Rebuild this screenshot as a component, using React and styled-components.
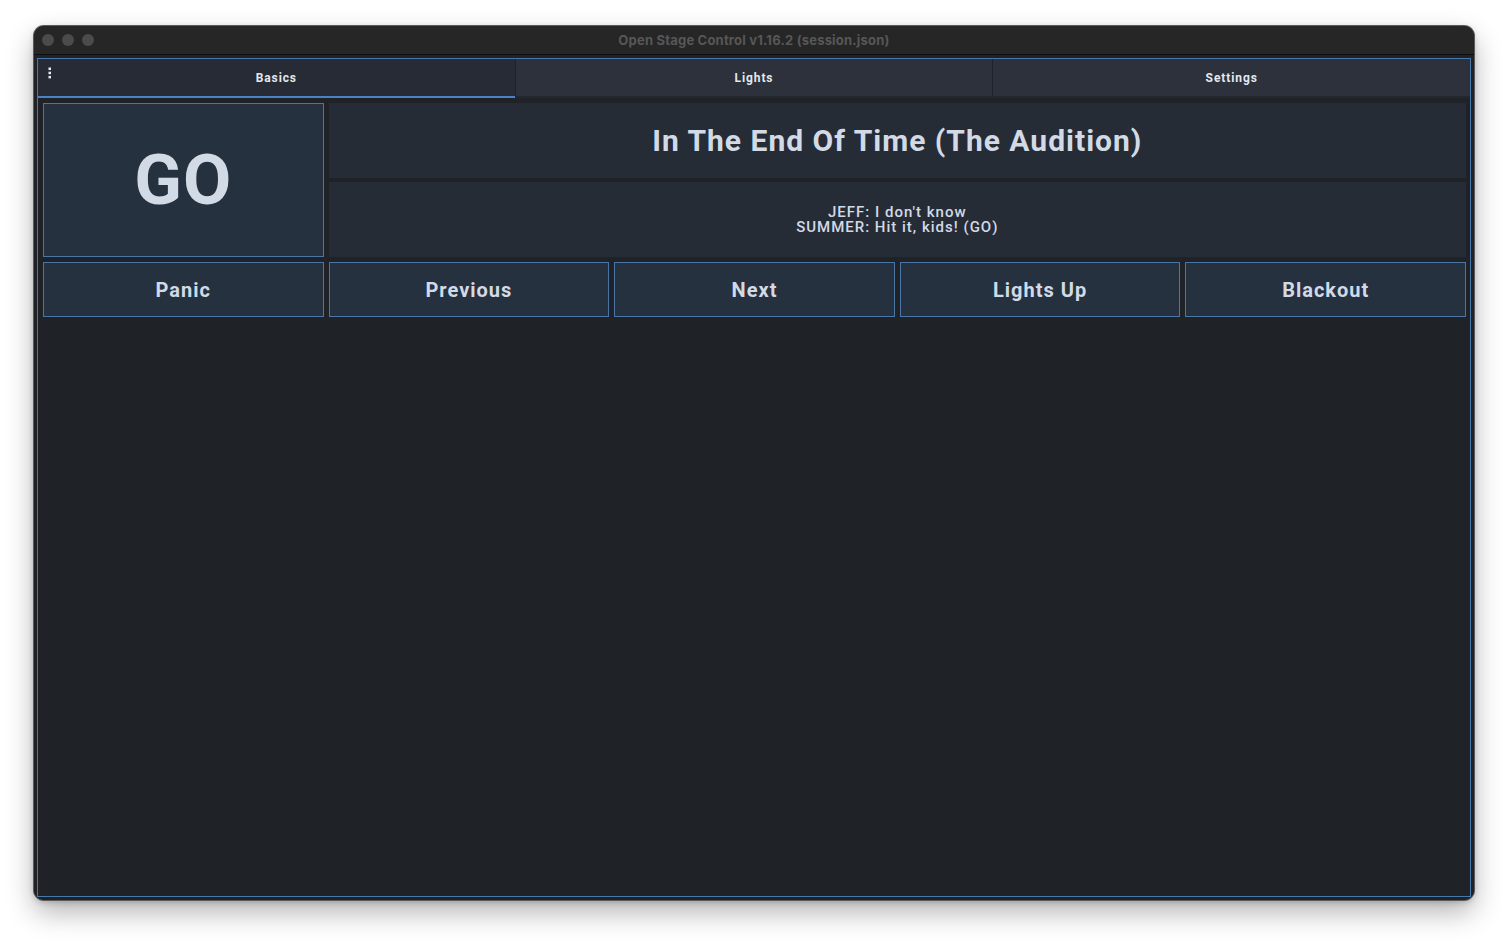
import React from 'react'
import styled, { createGlobalStyle } from 'styled-components'

const Global = createGlobalStyle`
    html, body {
        margin: 0;
        padding: 0;
        background: #ffffff;
    }
    * {
        box-sizing: border-box;
    }
`

const tabs = ['Basics', 'Lights', 'Settings']
const buttons = ['Panic', 'Previous', 'Next', 'Lights Up', 'Blackout']

function App() {
    return (
        <Page>
            <Global />
            <Window>
                <TitleBar>
                    <Lights>
                        <Dot />
                        <Dot />
                        <Dot />
                    </Lights>
                    <Title>Open Stage Control v1.16.2 (session.json)</Title>
                    <span />
                </TitleBar>
                <Body>
                    <Frame>
                        <TabBar>
                            <MenuIcon width='4' height='12' viewBox='0 0 4 12'>
                                <rect x='0.5' y='0.5' width='2.5' height='2.5' fill='#e8ecf2' />
                                <rect x='0.5' y='4.7' width='2.5' height='2.5' fill='#e8ecf2' />
                                <rect x='0.5' y='8.9' width='2.5' height='2.5' fill='#e8ecf2' />
                            </MenuIcon>
                            {tabs.map((t, i) => (
                                <Tab key={t} $active={i === 0}>{t}</Tab>
                            ))}
                        </TabBar>
                        <Panel>
                            <GoButton>GO</GoButton>
                            <TextBox $big>In The End Of Time (The Audition)</TextBox>
                            <TextBox>
                                JEFF: I don't know
                                <br />
                                SUMMER: Hit it, kids! (GO)
                            </TextBox>
                            {buttons.map((b) => (
                                <Button key={b}>{b}</Button>
                            ))}
                        </Panel>
                    </Frame>
                </Body>
            </Window>
        </Page>
    )
}

export default App

const Page = styled.div`
    min-height: 100vh;
    padding: 26px 34px 43px;
    background: #ffffff;
`

const Window = styled.div`
    width: 1440px;
    height: 874px;
    border-radius: 10px;
    overflow: hidden;
    display: flex;
    flex-direction: column;
    background: #1f2227;
    box-shadow: 0 0 0 1px #5a5a5a, 0 12px 28px rgba(0, 0, 0, 0.3), 0 2px 6px rgba(0, 0, 0, 0.2);
`

const TitleBar = styled.div`
    height: 29px;
    flex-shrink: 0;
    display: grid;
    grid-template-columns: 1fr auto 1fr;
    align-items: center;
    background: #262626;
    border-bottom: 1px solid #0e0e0e;
`

const Lights = styled.div`
    display: flex;
    gap: 8px;
    padding-left: 8px;
`

const Dot = styled.span`
    width: 12px;
    height: 12px;
    border-radius: 50%;
    background: #4b4b4b;
`

const Title = styled.div`
    font-family: Inter, 'Liberation Sans', sans-serif;
    font-size: 13px;
    font-weight: 700;
    letter-spacing: 0.2px;
    color: #575757;
`

const Body = styled.div`
    flex: 1;
    padding: 3px;
    background: #1f2227;
`

const Frame = styled.div`
    height: 100%;
    border: 1px solid #4878aa;
    display: flex;
    flex-direction: column;
    background: #1f2227;
`

const TabBar = styled.div`
    position: relative;
    display: flex;
    height: 39px;
    background: #2c313b;
`

const MenuIcon = styled.svg`
    position: absolute;
    left: 10px;
    top: 8px;
`

const Tab = styled.div`
    flex: 1;
    display: flex;
    align-items: center;
    justify-content: center;
    font-family: Roboto, 'Noto Sans', sans-serif;
    font-size: 12px;
    font-weight: 700;
    letter-spacing: 0.9px;
    color: #e3e8ef;
    background: ${(p) => (p.$active ? '#262b35' : '#2c313b')};
    border-bottom: 2px solid ${(p) => (p.$active ? '#4a82c3' : '#23272f')};
    & + & {
        border-left: 1px solid #1f2228;
    }
`

const Panel = styled.div`
    display: grid;
    grid-template-columns: repeat(5, 1fr);
    grid-template-rows: 75px 75px 56px;
    gap: 4px 5px;
    padding: 5px 4px 0 5px;
`

const GoButton = styled.div`
    grid-row: 1 / 3;
    display: flex;
    align-items: center;
    justify-content: center;
    background: #263140;
    border: 1px solid #4a76a6;
    font-family: Roboto, 'Noto Sans', sans-serif;
    font-size: 70px;
    font-weight: 700;
    letter-spacing: 1px;
    color: #d2dae6;
`

const TextBox = styled.div`
    grid-column: 2 / 6;
    display: flex;
    flex-direction: column;
    align-items: center;
    justify-content: ${(p) => (p.$big ? 'center' : 'flex-end')};
    text-align: center;
    background: #262c36;
    font-family: Roboto, 'Noto Sans', sans-serif;
    font-size: ${(p) => (p.$big ? '30px' : '15px')};
    font-weight: ${(p) => (p.$big ? 700 : 500)};
    line-height: ${(p) => (p.$big ? '1' : '15px')};
    letter-spacing: 1px;
    color: #d2dae6;
    padding-bottom: ${(p) => (p.$big ? '0' : '22px')};
`

const Button = styled.div`
    margin-top: 1px;
    display: flex;
    align-items: center;
    justify-content: center;
    background: #263140;
    border: 1px solid #4a76a6;
    font-family: Roboto, 'Noto Sans', sans-serif;
    font-size: 20px;
    font-weight: 700;
    letter-spacing: 1px;
    color: #d2dae6;
`
